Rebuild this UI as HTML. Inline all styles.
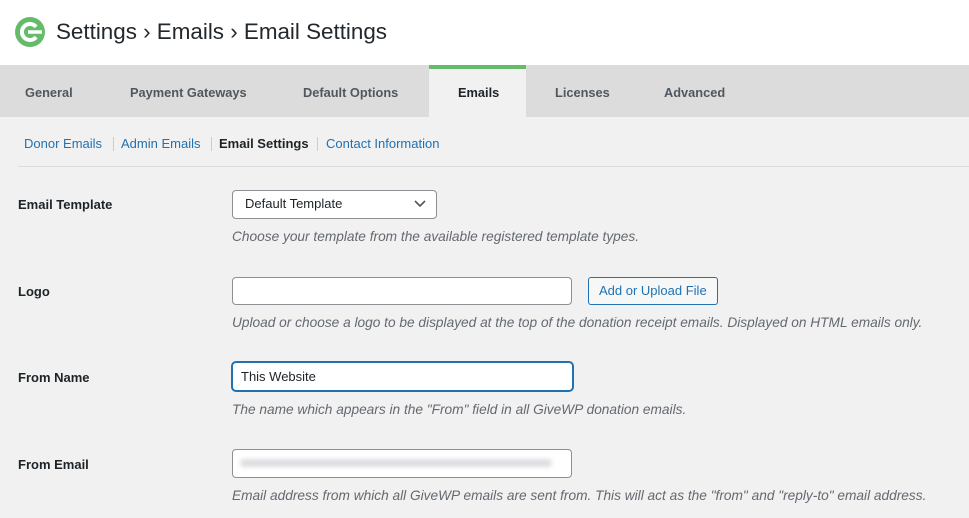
<!DOCTYPE html>
<html><head><style>
body{margin:0;width:969px;height:518px;background:#f1f1f1;font-family:"Liberation Sans",sans-serif;position:relative;overflow:hidden;color:#1d2327}
.a{position:absolute;white-space:nowrap}
.hdr{left:0;top:0;width:969px;height:65px;background:#fff}
.tabs{left:0;top:65px;width:969px;height:52px;background:#dcdcdc}
.tab{top:85px;font-size:12.8px;font-weight:bold;color:#50575e}
.lbl{font-size:13px;font-weight:bold;left:18px}
.desc{font-size:13.7px;font-style:italic;color:#646970;left:232px}
.inp{background:#fff;border:1px solid #8c8f94;border-radius:4px;box-sizing:border-box}
.sub{top:136px;font-size:13px;color:#2271b1}
.sep{top:137px;width:1px;height:14px;background:#ccc}
</style></head><body>
<div class="a hdr"></div>
<svg class="a" style="left:14px;top:16px" width="32" height="32" viewBox="0 0 32 32"><circle cx="16" cy="16" r="15" fill="#66bb6a"/><path d="M22.1 10.9 A8 8 0 1 0 22.1 21.1" fill="none" stroke="#fff" stroke-width="4"/><path d="M14 16 L28 16" stroke="#fff" stroke-width="3.5"/></svg>
<div class="a" style="left:56px;top:19px;font-size:22.4px;color:#23282d">Settings › Emails › Email Settings</div>
<div class="a tabs"></div>
<div class="a" style="left:429px;top:65px;width:97px;height:52px;background:#f1f1f1;border-top:4px solid #66bb6a;box-sizing:border-box"></div>
<div class="a tab" style="left:25px">General</div>
<div class="a tab" style="left:130px">Payment Gateways</div>
<div class="a tab" style="left:303px">Default Options</div>
<div class="a tab" style="left:458px;color:#1d2327">Emails</div>
<div class="a tab" style="left:555px">Licenses</div>
<div class="a tab" style="left:664px">Advanced</div>
<div class="a sub" style="left:24px">Donor Emails</div>
<div class="a sep" style="left:113px"></div>
<div class="a sub" style="left:121px">Admin Emails</div>
<div class="a sep" style="left:211px"></div>
<div class="a sub" style="left:219px;color:#1d2327;font-weight:bold">Email Settings</div>
<div class="a sep" style="left:317px"></div>
<div class="a sub" style="left:326px">Contact Information</div>
<div class="a" style="left:18px;top:166px;width:951px;height:1px;background:#dcdcde"></div>

<div class="a lbl" style="top:197px">Email Template</div>
<div class="a inp" style="left:232px;top:190px;width:205px;height:29px"></div>
<div class="a" style="left:245px;top:196px;font-size:13px">Default Template</div>
<svg class="a" style="left:414px;top:199px" width="12" height="10"><path d="M1 2 L6 7 L11 2" fill="none" stroke="#50575e" stroke-width="1.6"/></svg>
<div class="a desc" style="top:229px">Choose your template from the available registered template types.</div>

<div class="a lbl" style="top:284px">Logo</div>
<div class="a inp" style="left:232px;top:277px;width:340px;height:28px"></div>
<div class="a" style="left:588px;top:277px;width:130px;height:28px;border:1px solid #2271b1;border-radius:3px;box-sizing:border-box;background:#f6f7f7"></div>
<div class="a" style="left:599px;top:283px;font-size:13px;color:#2271b1">Add or Upload File</div>
<div class="a desc" style="top:315px">Upload or choose a logo to be displayed at the top of the donation receipt emails. Displayed on HTML emails only.</div>

<div class="a lbl" style="top:370px">From Name</div>
<div class="a inp" style="left:232px;top:362px;width:341px;height:29px;border-color:#2271b1;box-shadow:0 0 0 1px #2271b1"></div>
<div class="a" style="left:241px;top:369px;font-size:13px">This Website</div>
<div class="a desc" style="top:402px">The name which appears in the "From" field in all GiveWP donation emails.</div>

<div class="a lbl" style="top:457px">From Email</div>
<div class="a inp" style="left:232px;top:449px;width:340px;height:29px"></div>
<div class="a" style="left:240px;top:459px;width:312px;height:8px;background:#dedee2;border-radius:4px;filter:blur(2px)"></div>
<div class="a desc" style="top:488px">Email address from which all GiveWP emails are sent from. This will act as the "from" and "reply-to" email address.</div>
</body></html>
